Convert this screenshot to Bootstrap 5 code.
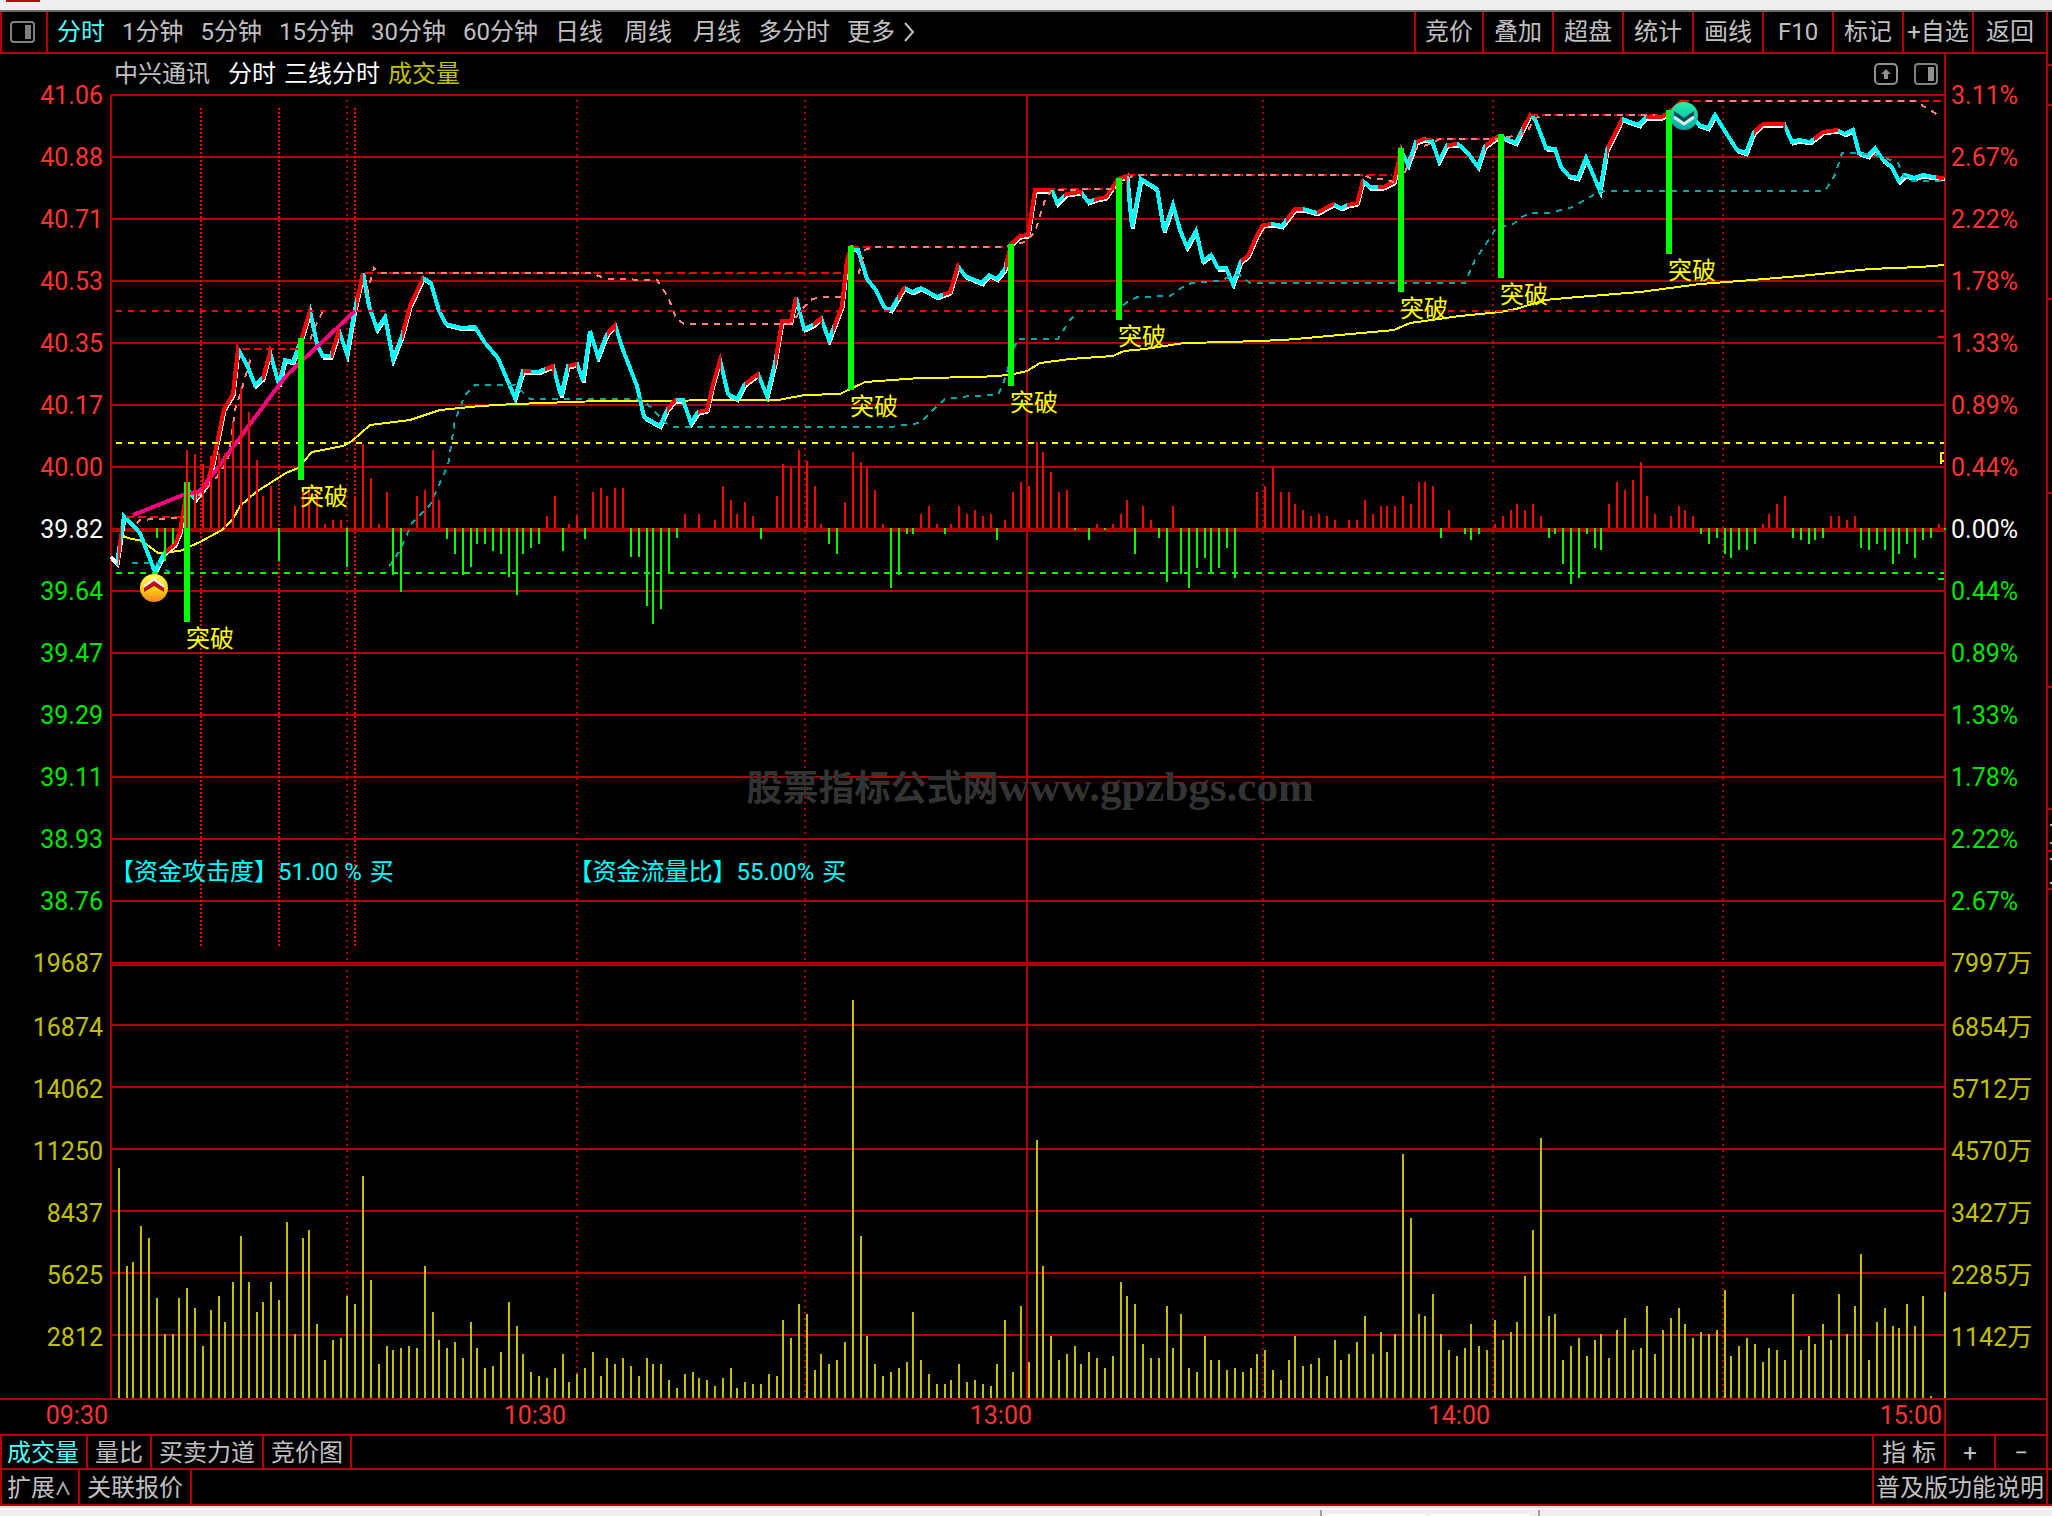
<!DOCTYPE html>
<html lang="zh-CN">
<head>
<meta charset="utf-8">
<meta name="viewport" content="width=device-width, initial-scale=1">
<title>中兴通讯 分时</title>
<link href="https://cdn.jsdelivr.net/npm/bootstrap@5.3.0/dist/css/bootstrap.min.css" rel="stylesheet">
<style>
:root{--rule:#b00000;--up:#ff3232;--down:#00e600;--vol:#c0c000;--txt:#c0c0c0;--cy:#54fcfc}
body{background:#000;color:var(--txt);font-family:Roboto,"Noto Sans CJK SC",sans-serif;font-size:24px;line-height:24px;font-weight:400;overflow-x:hidden}
button{background:none;border:0;padding:0;color:inherit;font:inherit;line-height:inherit;white-space:nowrap}
.window-edge{height:12px;background:#efefef;border-bottom:2px solid #6b6b6b}
.window-edge i{width:34px;height:2px;margin-left:6px;background:#b01010}
.frame-body{border-right:2px solid var(--rule)}
.side-strip{width:4px;flex:none}
.toolbar-row{height:42px;border-bottom:2px solid var(--rule)}
.layout-btn{width:48px;border-left:2px solid var(--rule);border-right:2px solid var(--rule)}
.periods{gap:17px;padding-left:9px}
.periods .wide-item{padding-right:4px}
.active-item{color:var(--cy)}
.tools button{width:70px;border-left:2px solid var(--rule)}
.tools button:first-child{width:68px}
.tools button:last-child{width:74px}
.chart-grid{display:grid;grid-template-columns:110px minmax(0,1fr) 102px}
.scale-col{padding-top:11px;font-size:25px;font-weight:300}
.scale-col div{height:62px;line-height:62px}
.scale-col .vol-next{margin-top:2px}
.scale-left{padding-right:7px;text-align:right}
.scale-right{padding-left:5px;border-left:2px solid var(--rule)}
.c-up{color:var(--up)}.c-down{color:var(--down)}.c-zero{color:#fff}.c-vol{color:var(--vol)}
.scale-col .c-up,.scale-col .c-down,.scale-col .c-vol,.scale-col .c-zero{font-weight:400}
.title-row{height:40px;padding:0 6px 0 4px}
.title-row .stock{margin-right:18px}
.title-row .series{margin-right:8px}
.plot{height:1304px}
.plot svg.canvas{width:100%;height:100%;display:block;overflow:visible}
.tag-text{position:absolute;color:#ff0;white-space:nowrap}
.info-text{position:absolute;color:#0ff;white-space:pre}
.info-text span{margin-left:8px}
.watermark{position:absolute;left:34.7%;top:671px;font:bold 43px/43px "Liberation Serif","Noto Sans CJK SC",serif;color:#333;white-space:nowrap}
.watermark span{font-size:36px}
.signal{position:absolute;width:28px;height:28px}
.time-row{display:grid;grid-template-columns:110px 458fr 466fr 458fr 452fr 102px;height:36px;border-top:2px solid var(--rule);font-size:25px;line-height:32px;color:var(--up);text-align:right}
.time-row span{padding-right:2px}
.time-row .last-cell{border-left:2px solid var(--rule)}
.tab-row{height:34px;border-top:2px solid var(--rule);border-left:2px solid var(--rule)}
.tab-row.lower{height:38px;border-bottom:2px solid var(--rule)}
.tab-row button{padding-top:2px}
.tab-row .tabs button{padding-left:7px;padding-right:7px;border-right:2px solid var(--rule)}
.tab-row .tabs button:first-child{padding-left:5px}
.tab-row .zoomers button{border-left:2px solid var(--rule)}
.window-foot{height:10px;background:#efefef;border-top:2px solid #e0e0e0}
.foot-line{height:2px;background:#fff}
.foot-tabs{height:6px;padding-left:1320px}
.foot-tabs .edge{width:2px;height:6px;background:#a0a0a0}
.foot-tabs .pane{width:100px;height:2px;background:#fff;margin-left:4px;align-self:end}
</style>
<script src="https://cdn.jsdelivr.net/npm/bootstrap@5.3.0/dist/js/bootstrap.bundle.min.js"></script>
</head>
<body>
<div class="window-edge"><i class="d-block"></i></div>
<div class="d-flex">
<main class="frame-body flex-grow-1">
  <nav class="toolbar-row d-flex">
    <button class="layout-btn d-flex align-items-center ps-2" aria-label="布局"><svg width="26" height="24" viewBox="0 0 26 24" fill="none"><rect x="1" y="2" width="23" height="20" rx="3" stroke="#808080" stroke-width="2"/><rect x="15" y="5" width="6" height="14" fill="#808080"/></svg></button>
    <div class="periods d-flex flex-grow-1">
      <button class="active-item">分时</button><button>1分钟</button><button>5分钟</button><button>15分钟</button><button>30分钟</button><button>60分钟</button><button class="wide-item">日线</button><button class="wide-item">周线</button><button>月线</button><button>多分时</button>
      <button class="d-flex align-items-center gap-2">更多<svg width="12" height="20" viewBox="0 0 12 20" fill="none" stroke="#c0c0c0" stroke-width="2"><path d="M2 1l8 9-8 9"/></svg></button>
    </div>
    <div class="tools d-flex">
      <button>竞价</button><button>叠加</button><button>超盘</button><button>统计</button><button>画线</button><button>F10</button><button>标记</button><button>+自选</button><button>返回</button>
    </div>
  </nav>

  <div class="chart-grid">
    <div class="scale-col scale-left">
      <div class="c-up">41.06</div><div class="c-up">40.88</div><div class="c-up">40.71</div><div class="c-up">40.53</div><div class="c-up">40.35</div><div class="c-up">40.17</div><div class="c-up">40.00</div><div class="c-zero">39.82</div><div class="c-down">39.64</div><div class="c-down">39.47</div><div class="c-down">39.29</div><div class="c-down">39.11</div><div class="c-down">38.93</div><div class="c-down">38.76</div>
      <div class="c-vol">19687</div><div class="c-vol vol-next">16874</div><div class="c-vol">14062</div><div class="c-vol">11250</div><div class="c-vol">8437</div><div class="c-vol">5625</div><div class="c-vol">2812</div>
    </div>
    <section>
      <header class="title-row d-flex align-items-center">
        <span class="stock">中兴通讯</span><span class="series c-zero">分时</span><span class="series c-zero">三线分时</span><span class="c-vol">成交量</span>
        <button class="ms-auto me-3 d-flex" aria-label="展开"><svg width="24" height="24" viewBox="0 0 24 24" fill="none"><rect x="1" y="2" width="22" height="20" rx="4" stroke="#909090" stroke-width="2"/><path d="M12 7l-5 5h3v5h4v-5h3z" fill="#909090"/></svg></button>
        <button class="d-flex" aria-label="侧栏"><svg width="24" height="24" viewBox="0 0 24 24" fill="none"><rect x="1" y="2" width="22" height="20" rx="3" stroke="#808080" stroke-width="2"/><rect x="14" y="5" width="6" height="14" fill="#909090"/></svg></button>
      </header>
      <div class="plot position-relative" id="plot">
        <svg class="canvas" viewBox="110 94 1834 1304" preserveAspectRatio="none" shape-rendering="crispEdges" fill="none" id="canvas"></svg>
        <div class="info-text" style="left:0;top:766px">【资金攻击度】51.00 %<span>买</span></div>
        <div class="info-text" style="left:25%;top:766px">【资金流量比】55.00%<span>买</span></div>
        <div class="watermark"><span>股票指标公式网</span>www.gpzbgs.com</div>
      </div>
    </section>
    <div class="scale-col scale-right">
      <div class="c-up">3.11%</div><div class="c-up">2.67%</div><div class="c-up">2.22%</div><div class="c-up">1.78%</div><div class="c-up">1.33%</div><div class="c-up">0.89%</div><div class="c-up">0.44%</div><div class="c-zero">0.00%</div><div class="c-down">0.44%</div><div class="c-down">0.89%</div><div class="c-down">1.33%</div><div class="c-down">1.78%</div><div class="c-down">2.22%</div><div class="c-down">2.67%</div>
      <div class="c-vol">7997万</div><div class="c-vol vol-next">6854万</div><div class="c-vol">5712万</div><div class="c-vol">4570万</div><div class="c-vol">3427万</div><div class="c-vol">2285万</div><div class="c-vol">1142万</div>
    </div>
  </div>

  <div class="time-row"><span>09:30</span><span>10:30</span><span>13:00</span><span>14:00</span><span>15:00</span><span class="last-cell"></span></div>

  <div class="tab-row d-flex justify-content-between">
    <div class="tabs d-flex"><button class="active-item">成交量</button><button>量比</button><button>买卖力道</button><button>竞价图</button></div>
    <div class="zoomers d-flex"><button style="width:72px">指 标</button><button style="width:50px">+</button><button style="width:52px">−</button></div>
  </div>
  <div class="tab-row lower d-flex justify-content-between">
    <div class="tabs d-flex"><button class="d-flex align-items-center">扩展<svg width="16" height="18" viewBox="0 0 16 18" fill="none" stroke="#a0a0a0" stroke-width="2"><path d="M2 16l6-12 6 12"/></svg></button><button>关联报价</button></div>
    <div class="zoomers d-flex"><button style="width:174px">普及版功能说明</button></div>
  </div>
</main>
<aside class="side-strip"><svg width="4" height="1494" viewBox="0 12 4 1494" stroke="#b00000" stroke-width="2" class="d-block"><path d="M0 65h4M0 105h4M0 299h4M0 493h4M0 687h4M0 809h4M0 851h4M0 889h4M0 1469h4M0 1505h4"/><path stroke="#c0c000" d="M2 825h2M2 843h2"/><path stroke="#c0c0c0" d="M2 859h2M2 883h2"/></svg></aside>
</div>
<footer class="window-foot"><div class="foot-line"></div><div class="foot-tabs d-flex"><span class="edge"></span><span class="pane"></span><span class="pane"></span><span class="edge ms-2"></span></div></footer>

<script>
const X0 = 110, Y0 = 94, W = 1834;
const cv = document.getElementById('canvas'), plot = document.getElementById('plot');
const out = [];
const path = (d, color, width = 2, extra = '') => out.push(`<path d="${d}" stroke="${color}" stroke-width="${width}" ${extra}/>`);
const poly = (s, dx = 0, dy = 0) => 'M' + s.trim().split(/\s+/).map(p => { const [x, y] = p.split(',').map(Number); return (x + dx) + ' ' + (y + dy); }).join('L');
const minuteX = i => Math.floor((111 + 7.645 * i) / 2) * 2 + 1;

// grid
let g = '';
for (let k = 0; k < 14; k++) if (k !== 7) g += `M110 ${95 + 62 * k}H1944`;
for (let k = 0; k < 6; k++) g += `M110 ${1025 + 62 * k}H1944`;
path(g, '#b00000');
path('M110 530H1944M110 964H1944', '#b00000', 4);
path('M111 94V1398M1027 96V1398', '#b00000');
for (const x of [347, 577, 805, 1263, 1493, 1723]) path(`M${x} 100V1398`, '#b00000', 2, 'stroke-dasharray="2 4"');
for (const x of [201, 279, 355]) path(`M${x} 108V948`, '#ff0000', 2, 'stroke-dasharray="2 2"');

// volume bars: tops, one per minute, in thirds of a pixel below y=1160
const vol = [24,318,306,198,234,414,522,522,414,384,444,558,450,408,486,366,228,366,456,426,366,420,186,522,234,210,492,600,540,534,408,432,48,360,612,558,570,564,558,564,318,456,540,564,546,594,486,564,624,618,576,426,498,582,636,648,654,624,582,666,642,624,576,648,594,612,594,618,648,594,612,612,660,684,642,636,654,660,678,654,624,684,666,672,672,642,648,480,534,432,462,630,582,612,600,546,-480,228,528,612,648,636,624,606,456,600,642,672,672,660,612,666,660,672,678,612,480,636,438,606,-60,318,528,600,582,558,612,576,594,624,588,366,408,432,552,594,594,438,564,462,624,636,528,600,600,630,624,636,624,582,570,630,660,600,528,618,612,594,648,540,600,582,546,468,582,516,576,522,-18,174,462,468,402,522,570,588,564,492,558,570,480,540,516,486,348,210,-66,468,462,600,558,534,588,540,522,594,510,474,570,564,438,582,510,474,444,492,534,516,522,510,390,588,558,534,552,606,564,570,600,402,570,528,552,492,540,402,522,438,282,600,486,444,498,504,432,498,408,708,714,396];
path(vol.map((v, i) => `M${minuteX(i + 1)} 1398V${1160 + v / 3}`).join(''), '#c0c000');

// momentum histogram: signed heights, one per minute
const mom = [0,0,0,0,0,-10,-33,-16,0,78,74,64,72,75,75,106,140,116,68,32,42,-33,0,22,40,42,42,4,8,8,-39,32,84,50,4,36,-47,-64,0,32,38,78,28,-11,-26,-47,-39,-16,-16,-23,-26,-49,-67,-26,-20,-16,12,32,-23,4,12,-11,36,40,32,40,40,-29,-29,-78,-96,-81,-44,-10,14,0,14,0,8,42,28,14,26,12,-11,0,32,64,60,78,67,42,4,-16,-26,26,76,66,60,38,4,-60,-47,-6,-6,14,22,4,-6,4,22,14,18,12,14,-12,8,36,46,42,86,76,56,36,38,-2,0,-12,4,-2,4,14,28,-26,22,8,-10,-54,22,-46,-60,-40,-30,-45,-40,-20,-50,0,0,36,42,60,36,36,24,18,12,14,12,8,0,8,8,28,14,22,22,22,32,24,46,46,42,-10,18,0,-6,-12,-6,0,4,12,18,24,18,24,12,-10,-6,-36,-56,-50,-6,-20,-22,24,46,38,48,66,32,14,0,12,22,18,12,-6,-16,-10,-26,-30,-22,-22,-16,4,14,24,32,-10,-12,-16,-12,-10,12,12,8,12,-20,-22,-16,-22,-36,-26,-16,-30,-12,-10,4];
let up = '', dn = '';
mom.forEach((v, i) => { const s = `M${minuteX(i + 1)} 528v${-v}`; if (v > 0) up += s; else if (v < 0) dn += s; });

// average price
path(poly('119,534 128,538 142,541 158,553 180,551 200,542 222,530 233,519 240,506 256,492 286,473 298,468 312,452 343,446 352,441 370,425 410,420 440,410 480,406 515,404 600,401 778,400 805,395 840,394 865,382 920,378 980,377 1010,375 1027,371 1040,363 1070,359 1113,356 1124,351 1145,349 1184,343 1230,342 1284,340 1340,335 1394,330 1410,323 1460,316 1500,312 1516,309 1545,300 1566,298 1640,292 1700,284 1740,281 1800,276 1870,269 1920,267 1944,265'), '#ff0');

// price line: white edge, cyan body, red where it rises
const price = '111,557 117,563 124,516 140,533 155,572 164,553 175,544 180,532 187,489 195,499 207,484 213,463 224,409 233,394 238,349 247,365 255,385 263,378 270,352 279,385 285,360 293,362 302,337 310,311 317,344 323,356 331,356 339,331 347,354 354,314 363,273 369,306 377,329 385,317 393,359 402,336 410,306 423,278 431,283 439,311 446,324 462,328 475,327 485,343 498,358 515,398 523,371 538,372 553,366 561,396 568,366 577,364 583,381 590,331 598,357 607,334 615,325 623,350 637,386 644,417 660,426 667,410 675,400 683,400 691,423 698,412 707,410 713,384 720,360 728,394 737,399 745,384 758,374 767,396 775,363 782,321 791,321 796,297 804,329 813,325 821,318 829,340 842,306 847,260 851,247 858,250 867,279 875,289 885,308 891,310 904,288 913,292 921,288 937,297 950,292 958,266 965,276 982,283 989,275 997,279 1005,269 1011,244 1020,236 1028,235 1035,190 1052,190 1057,203 1066,194 1081,192 1088,202 1097,199 1106,197 1118,179 1127,176 1132,227 1141,179 1157,189 1164,231 1173,205 1180,230 1187,247 1196,231 1203,261 1211,255 1218,268 1226,268 1233,284 1241,261 1248,256 1257,235 1263,225 1273,224 1282,226 1295,209 1303,209 1317,213 1333,204 1341,208 1348,205 1357,203 1363,181 1370,187 1383,187 1394,182 1401,150 1408,165 1416,142 1424,139 1432,141 1439,161 1447,145 1458,144 1467,152 1478,167 1485,146 1499,136 1516,143 1530,115 1535,119 1546,148 1555,149 1561,167 1569,176 1578,178 1586,158 1600,191 1607,150 1622,119 1639,125 1646,117 1662,117 1673,109 1681,102 1699,125 1708,128 1715,115 1723,128 1737,150 1746,153 1754,132 1763,124 1784,124 1792,142 1799,140 1810,142 1823,132 1837,130 1845,134 1853,130 1859,153 1868,156 1875,148 1883,160 1892,167 1899,181 1905,175 1914,178 1923,175 1934,177 1944,178';
const rising = [[118,121],[164,190],[197,239],[262,271],[300,310],[331,340],[356,363],[402,423],[523,531],[545,554],[568,577],[607,616],[667,676],[698,721],[745,759],[775,797],[813,822],[833,851],[898,905],[943,959],[1005,1052],[1064,1082],[1094,1127],[1241,1271],[1286,1303],[1317,1334],[1347,1363],[1378,1401],[1416,1425],[1447,1457],[1485,1501],[1522,1531],[1607,1622],[1646,1682],[1754,1785],[1814,1838],[1936,1946]];
out.push('<clipPath id="rise">' + rising.map(([a, b]) => `<rect x="${a}" y="94" width="${b - a}" height="500"/>`).join('') + '</clipPath>');
path(poly(price, 1, 2), '#fff', 3);
path(poly(price), '#0ff', 4);
path(poly(price), '#f00', 4, 'clip-path="url(#rise)"');
path('M111 557l6 6', '#fff', 3);

// channel lines
path('M126 517H184M242 349H300M365 273H845M851 247H1010M1035 189H1115M1127 175H1392M1424 139H1495M1530 115H1660M1681 101H1944', '#f00', 2, 'stroke-dasharray="8 4"');
for (const s of ['133,528 140,520 190,517', '194,500 215,480 228,460 235,410 243,385 252,354', '308,345 316,325 323,311', '365,300 374,268 380,273 590,273 608,279 657,280 668,297 676,318 684,324 790,324 810,300 820,297 845,297', '857,280 865,250 872,247 1005,247 1025,242 1035,232 1045,200 1052,190 1110,189 1125,182 1133,175 1364,175 1372,179 1384,179 1400,184 1410,160 1416,148 1430,144 1440,139 1497,139 1520,135 1527,132 1535,118 1545,115 1655,115', '1700,101 1915,101 1925,107 1938,115'])
  path(poly(s), '#ff8080', 2, 'stroke-dasharray="6 6" stroke-dashoffset="-6"');
path(poly('132,563 158,563 170,573 385,573 400,550 412,523 430,505 448,465 455,420 465,395 475,385 515,385 530,399 640,399 652,408 662,420 672,427 890,427 920,423 935,408 945,399 970,396 998,395 1003,384 1007,372 1013,350 1018,339 1058,339 1070,320 1078,311 1115,311 1130,300 1138,297 1170,296 1184,286 1192,283 1220,281 1233,275 1240,275 1250,283 1465,283 1475,260 1490,238 1496,228 1512,225 1522,217 1530,213 1548,213 1570,208 1585,200 1600,191 1825,191 1835,175 1842,153 1870,154 1883,157 1898,163 1904,176 1912,181 1944,181'), '#00a8a8', 2, 'stroke-dasharray="6 6"');
path('M116 311H1944', '#f00', 2, 'stroke-dasharray="6 6"');
path('M116 443H1944', '#ff0', 2, 'stroke-dasharray="6 6"');
path('M116 573H1944', '#0f0', 2, 'stroke-dasharray="6 6"');
path(poly('133,515 183,495 200,491 213,474 279,385 287,375 355,311'), '#ff0080', 4);
path('M1938 337h6', '#f00');
path('M1938 579h6M1944 529h2', '#0f0');
path('M1944 453h-3v11M1941 461h3', '#ff0');

// breakout markers: x, top, bottom
const breaks = [[187,482,622],[301,338,480],[851,246,390],[1011,244,386],[1119,178,320],[1401,148,292],[1501,134,278],[1669,110,254]];
path(breaks.map(([x, a, b]) => `M${x} ${a}V${b}`).join(''), '#0f0', 6);
path(up, '#f00');
path(dn, '#0f0');
cv.innerHTML = out.join('');

const overlay = (html, x, y) => {
  const t = document.createElement('template'); t.innerHTML = html;
  const el = t.content.firstChild;
  el.style.left = ((x - X0) / W * 100).toFixed(2) + '%'; el.style.top = (y - Y0) + 'px';
  plot.append(el);
};
for (const [x, , b] of breaks) overlay('<span class="tag-text">突破</span>', x - 1, b + 5);
overlay('<svg class="signal" viewBox="0 0 28 28"><defs><linearGradient id="gy" x2="0" y2="1"><stop stop-color="#ffff50"/><stop offset=".6" stop-color="#ffc810"/><stop offset="1" stop-color="#f08030"/></linearGradient></defs><circle cx="14" cy="14" r="14" fill="url(#gy)"/><path d="M4 13l10-8 10 8" fill="none" stroke="#f0e8e0" stroke-width="3"/><path d="M4 18v-4l10-7 10 7v4l-10-6z" fill="#b81010"/></svg>', 140, 574);
overlay('<svg class="signal" viewBox="0 0 28 28"><defs><linearGradient id="gt" x2="0" y2="1"><stop stop-color="#28f0a8"/><stop offset="1" stop-color="#00a8a8"/></linearGradient></defs><circle cx="14" cy="14" r="14" fill="url(#gt)"/><path d="M4 9v4l10 7 10-7V9l-10 7z" fill="#084858"/><path d="M4 15l10 7 10-7" fill="none" stroke="#d8ecec" stroke-width="3"/></svg>', 1670, 102);
</script>
</body>
</html>
